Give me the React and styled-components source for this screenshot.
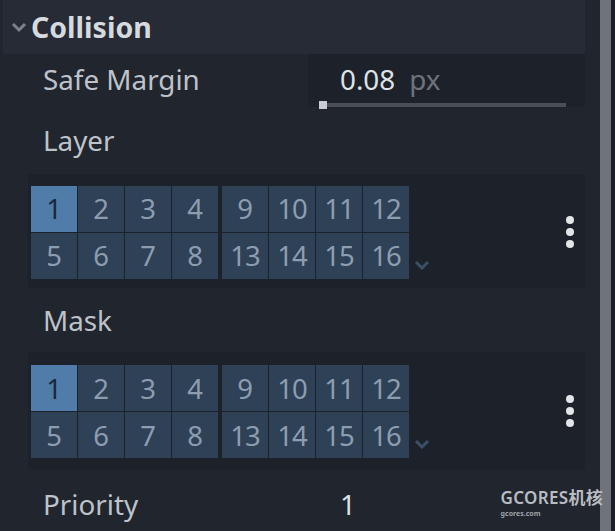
import React from "react";
import styled, { createGlobalStyle } from "styled-components";

const Global = createGlobalStyle`
  html, body { margin: 0; padding: 0; background: #20252e; }
  #root { width: 615px; height: 531px; }
`;

const Frame = styled.div`
  position: relative;
  width: 615px;
  height: 531px;
  overflow: hidden;
  background: #20252e;
  display: flex;
  font-family: "Noto Sans", "Open Sans", sans-serif;
  color: #c3c7cd;
`;

const Content = styled.div`
  width: 582px;
  margin-left: 3px;
  display: flex;
  flex-direction: column;
`;

const Scrollbar = styled.div`
  width: 11px;
  margin-left: 15px;
  background: #6f737b;
`;

const ScrollTail = styled.div`
  width: 4px;
  background: #1c1f26;
`;

const Header = styled.div`
  height: 54px;
  background: #262b35;
  display: flex;
  align-items: center;
  gap: 3px;
  padding-left: 7px;
  box-sizing: border-box;
`;

const HeaderTitle = styled.span`
  font-weight: 700;
  font-size: 28.5px;
  color: #d6d9de;
  line-height: 1;
  margin-top: 1px;
`;

const PropRow = styled.div`
  height: ${(p) => p.$h}px;
  display: flex;
  align-items: center;
  box-sizing: border-box;
`;

const Label = styled.div`
  width: 265px;
  padding-left: 40px;
  font-size: 27.8px;
  color: #bfc3c9;
  line-height: 1;
  margin-top: ${(p) => p.$mt || 0}px;
`;

const Field = styled.div`
  flex: 1;
  align-self: stretch;
  background: ${(p) => (p.$dark ? "#1d2129" : "transparent")};
  display: flex;
  flex-direction: column;
  justify-content: center;
  padding-left: 11px;
  padding-right: 19px;
  box-sizing: border-box;
`;

const ValueLine = styled.div`
  display: flex;
  align-items: baseline;
  gap: 14px;
  padding-left: 21px;
  font-size: 27.8px;
  line-height: 1;
  color: #dfe2e6;
  margin-top: ${(p) => p.$mt || 0}px;
`;

const Unit = styled.span`
  color: #6e737b;
`;

const Slider = styled.div`
  margin-top: 7px;
  height: 8px;
  display: flex;
  align-items: center;
`;

const Grabber = styled.div`
  width: 8px;
  height: 8px;
  background: #c9ccd1;
`;

const Track = styled.div`
  flex: 1;
  height: 4px;
  background: #494e57;
`;

const LayerPanel = styled.div`
  margin-left: 25px;
  height: ${(p) => p.$h}px;
  background: #1d2129;
  display: flex;
  align-items: flex-start;
  padding: ${(p) => p.$pt}px 0 0 3px;
  box-sizing: border-box;
`;

const Groups = styled.div`
  display: flex;
  gap: 4px;
`;

const Group = styled.div`
  display: grid;
  grid-template-columns: repeat(4, 46px);
  grid-auto-rows: 46px;
  gap: 1px;
`;

const Cell = styled.div`
  background: ${(p) => (p.$on ? "#4f7ca8" : "#2e4156")};
  color: ${(p) => (p.$on ? "#19283a" : "#8d9db0")};
  font-size: 27.5px;
  line-height: 1;
  display: flex;
  align-items: center;
  justify-content: center;
  letter-spacing: ${(p) => (p.$wide ? "-1px" : "0")};
`;

const ExpandChevron = styled.svg`
  margin-left: 5px;
  margin-top: 74px;
  flex: none;
`;

const MenuDots = styled.div`
  margin-left: auto;
  margin-right: 11px;
  margin-top: ${(p) => p.$mt}px;
  display: flex;
  flex-direction: column;
  gap: 4px;
`;

const Dot = styled.div`
  width: 8px;
  height: 8px;
  border-radius: 50%;
  background: #e3e5e8;
`;

const Watermark = styled.div`
  position: absolute;
  right: 12px;
  bottom: 13px;
  display: flex;
  flex-direction: column;
  align-items: flex-start;
  color: #b9bcc1;
  line-height: 1;
`;

const WmMain = styled.div`
  font-family: "Noto Sans", "Noto Sans CJK SC", sans-serif;
  font-weight: 600;
  font-size: 17px;
  line-height: 18px;
  letter-spacing: 0.3px;
`;

const WmSub = styled.div`
  font-family: "Noto Sans", sans-serif;
  font-weight: 700;
  font-size: 7px;
  line-height: 8px;
  margin-top: 3px;
  color: #9fa3a8;
`;

const LayerGrid = ({ h, pt, dotTop }) => {
  const g1 = [1, 2, 3, 4, 5, 6, 7, 8];
  const g2 = [9, 10, 11, 12, 13, 14, 15, 16];
  return (
    <LayerPanel $h={h} $pt={pt}>
      <Groups>
        <Group>
          {g1.map((n) => (
            <Cell key={n} $on={n === 1}>
              {n}
            </Cell>
          ))}
        </Group>
        <Group>
          {g2.map((n) => (
            <Cell key={n} $wide={n > 9}>
              {n}
            </Cell>
          ))}
        </Group>
      </Groups>
      <ExpandChevron width="16" height="10" viewBox="0 0 16 10">
        <path d="M2 2 L8 8 L14 2" fill="none" stroke="#3b4f66" strokeWidth="3" />
      </ExpandChevron>
      <MenuDots $mt={dotTop}>
        <Dot />
        <Dot />
        <Dot />
      </MenuDots>
    </LayerPanel>
  );
};

export default function App() {
  return (
    <>
      <Global />
      <Frame>
        <Content>
          <Header>
            <svg width="18" height="12" viewBox="0 0 18 12">
              <path d="M3 3 L9 9 L15 3" fill="none" stroke="#7d828a" strokeWidth="3" />
            </svg>
            <HeaderTitle>Collision</HeaderTitle>
          </Header>
          <PropRow $h={53}>
            <Label $mt={0}>Safe Margin</Label>
            <Field $dark>
              <ValueLine $mt={14}>
                0.08<Unit>px</Unit>
              </ValueLine>
              <Slider>
                <Grabber />
                <Track />
              </Slider>
            </Field>
          </PropRow>
          <PropRow $h={67}>
            <Label $mt={1}>Layer</Label>
          </PropRow>
          <LayerGrid h={114} pt={12} dotTop={30} />
          <PropRow $h={65}>
            <Label $mt={1}>Mask</Label>
          </PropRow>
          <LayerGrid h={117} pt={13} dotTop={30} />
          <PropRow $h={62}>
            <Label $mt={10}>Priority</Label>
            <Field>
              <ValueLine $mt={10}>1</ValueLine>
            </Field>
          </PropRow>
        </Content>
        <Scrollbar />
        <ScrollTail />
        <Watermark>
          <WmMain>GCORES机核</WmMain>
          <WmSub>gcores.com</WmSub>
        </Watermark>
      </Frame>
    </>
  );
}
